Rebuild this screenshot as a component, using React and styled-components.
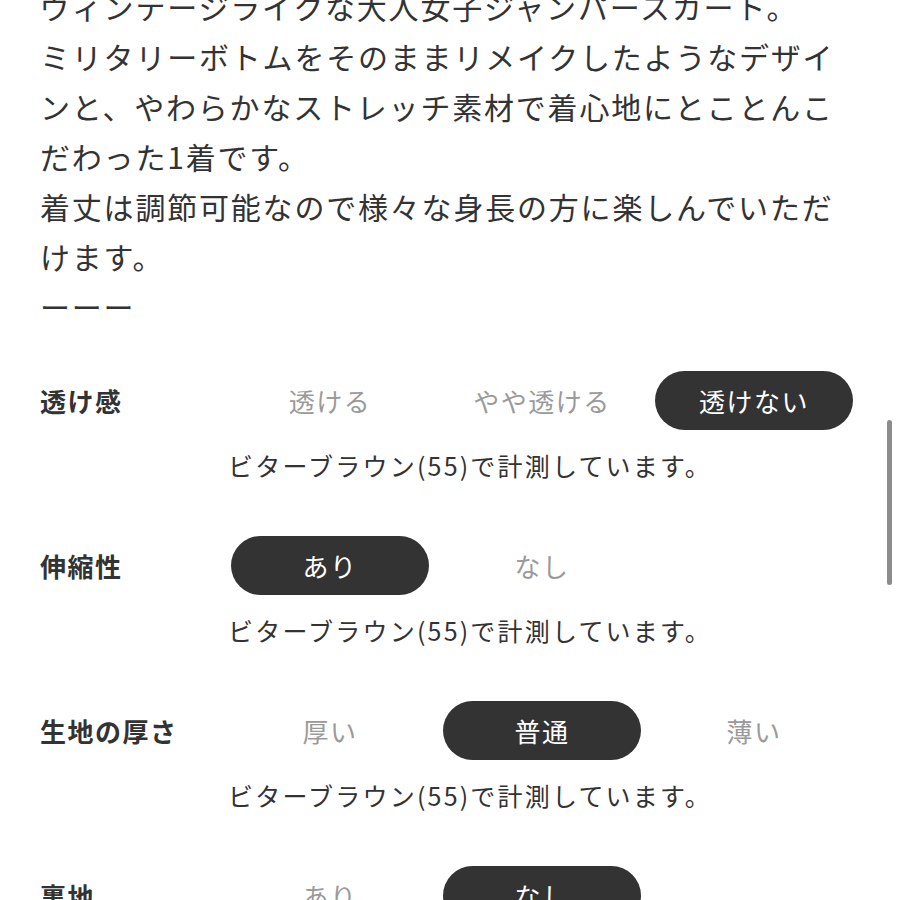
import React from "react";
import styled, { createGlobalStyle } from "styled-components";

const Global = createGlobalStyle`
  html, body { margin: 0; padding: 0; background: #fff; overflow: hidden; }
  body { font-family: "Noto Sans CJK JP", "Noto Sans", sans-serif; color: #333; }
`;

const Page = styled.div`
  width: 900px;
  height: 900px;
  overflow: hidden;
  padding-left: 40px;
  box-sizing: border-box;
`;

const Description = styled.div`
  margin-top: -19px;
  font-size: 30px;
  line-height: 50px;
  letter-spacing: 1.8px;
  color: #333;
  white-space: nowrap;
`;

const Line = styled.div``;

const Specs = styled.div`
  margin-top: 40px;
  display: flex;
  flex-direction: column;
  gap: 54px;
`;

const SpecRow = styled.div`
  display: grid;
  grid-template-columns: 177px repeat(3, 198px);
  column-gap: 14px;
  row-gap: 18px;
  align-items: center;
`;

const Label = styled.div`
  font-size: 26px;
  font-weight: 700;
  letter-spacing: 1.5px;
  color: #333;
  white-space: nowrap;
`;

const Option = styled.div`
  height: 59px;
  border-radius: 30px;
  display: flex;
  align-items: center;
  justify-content: center;
  font-size: 26px;
  letter-spacing: 1.5px;
  white-space: nowrap;
  background: ${(p) => (p.$active ? "#333333" : "transparent")};
  color: ${(p) => (p.$active ? "#ffffff" : "#9a9a9a")};
`;

const Caption = styled.div`
  grid-column: 2 / span 3;
  margin-left: -3px;
  font-size: 25px;
  line-height: 34px;
  letter-spacing: 2.2px;
  color: #333;
  white-space: nowrap;
`;

const ScrollThumb = styled.div`
  position: fixed;
  right: 8px;
  top: 420px;
  width: 5px;
  height: 165px;
  border-radius: 3px;
  background: #8c8c8c;
`;

const lines = [
  "ヴィンテージライクな大人女子ジャンパースカート。",
  "ミリタリーボトムをそのままリメイクしたようなデザイ",
  "ンと、やわらかなストレッチ素材で着心地にとことんこ",
  "だわった1着です。",
  "着丈は調節可能なので様々な身長の方に楽しんでいただ",
  "けます。",
  "ーーー",
];

const specs = [
  { label: "透け感", options: ["透ける", "やや透ける", "透けない"], active: 2 },
  { label: "伸縮性", options: ["あり", "なし", ""], active: 0 },
  { label: "生地の厚さ", options: ["厚い", "普通", "薄い"], active: 1 },
  { label: "裏地", options: ["あり", "なし", ""], active: 1 },
];

export default function App() {
  return (
    <>
      <Global />
      <Page>
        <Description>
          {lines.map((l, i) => (
            <Line key={i}>{l}</Line>
          ))}
        </Description>
        <Specs>
          {specs.map((s, i) => (
            <SpecRow key={i}>
              <Label>{s.label}</Label>
              {s.options.map((o, j) => (
                <Option key={j} $active={j === s.active}>
                  {o}
                </Option>
              ))}
              <Caption>ビターブラウン(55)で計測しています。</Caption>
            </SpecRow>
          ))}
        </Specs>
      </Page>
      <ScrollThumb />
    </>
  );
}
